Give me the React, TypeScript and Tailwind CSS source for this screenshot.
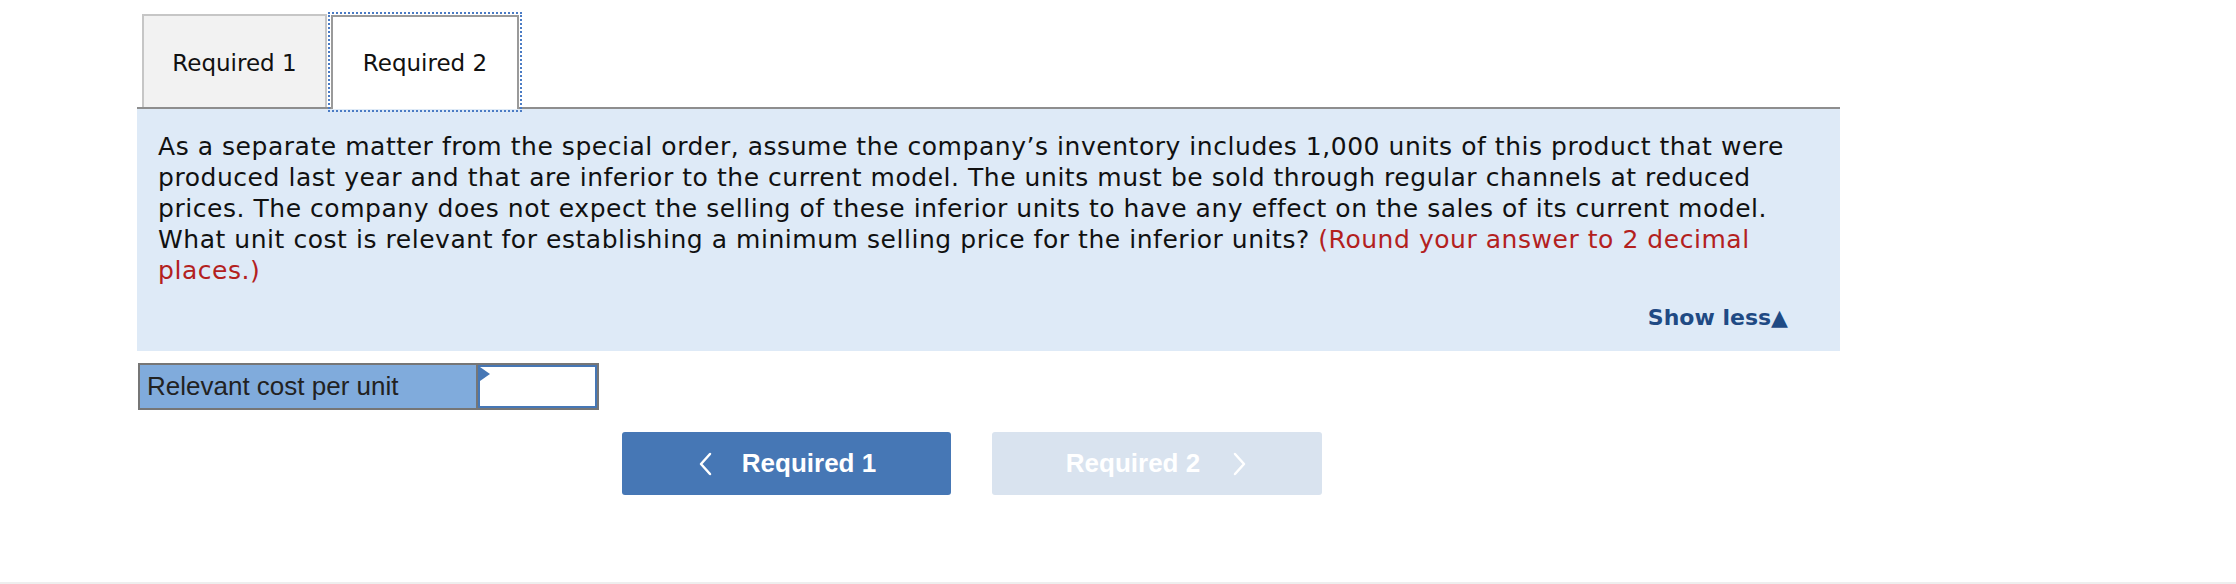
import React from "react";

const verdana = { fontFamily: '"DejaVu Sans", Verdana, sans-serif' };
const arial = { fontFamily: '"Liberation Sans", Arial, sans-serif' };

function Chevron({ dir }: { dir: "left" | "right" }) {
  return (
    <svg width="16" height="24" viewBox="0 0 16 24" fill="none" stroke="currentColor" strokeWidth={2.5} strokeLinecap="round" strokeLinejoin="round">
      {dir === "left" ? <path d="M13 2 L4 12 L13 22" /> : <path d="M3 2 L12 12 L3 22" />}
    </svg>
  );
}

export default function App() {
  return (
    <div className="w-[2236px] h-[584px] bg-white border-b-2 border-[#eeeeee] flex flex-col">
      <div className="pl-[137px] pt-[12px] w-[1840px]">
        {/* Tabs */}
        <div className="flex items-start h-[97px] border-b-2 border-[#8e8e8e]" style={verdana}>
          <div className="ml-[5px] mt-[2px] w-[185px] h-[93px] bg-[#f2f2f2] border-2 border-b-0 border-[#c6c6c6] flex items-center justify-center pt-[3px] text-[23px] text-[#111]">
            Required 1
          </div>
          <div className="relative z-10 ml-[4px] mt-[3px] w-[188px] h-[94px] bg-white border-2 border-b-0 border-[#9a9a9a] outline-2 outline-dotted outline-[#4a7bc4] outline-offset-1 flex items-center justify-center text-[23px] text-[#111]">
            Required 2
          </div>
        </div>

        {/* Question panel */}
        <div className="h-[242px] bg-[#deeaf7] pl-[21px] pr-[35px] pt-[22px] flex flex-col" style={verdana}>
          <p className="text-[25px] leading-[31px] tracking-[0.54px] text-[#111]">
            As a separate matter from the special order, assume the company’s inventory includes 1,000 units of this product that were produced last year and that are inferior to the current model. The units must be sold through regular channels at reduced prices. The company does not expect the selling of these inferior units to have any effect on the sales of its current model. What unit cost is relevant for establishing a minimum selling price for the inferior units?{" "}
            <span className="text-[#b3211e]">(Round your answer to 2 decimal places.)</span>
          </p>
          <div className="flex justify-end mt-[17px] mr-[17px]">
            <span className="text-[22px] leading-[30px] font-bold text-[#1f4a84]">Show less▲</span>
          </div>
        </div>

        {/* Answer row */}
        <div className="flex ml-[1px] mt-[12px] h-[47px]" style={arial}>
          <div className="w-[340px] border-2 border-[#767676] bg-[#80abdc] flex items-center pl-[7px] text-[26px] text-[#222]">
            Relevant cost per unit
          </div>
          <div className="w-[121px] border-2 border-l-0 border-[#767676]">
            <div className="relative w-full h-full border-2 border-[#4677b5] bg-white">
              <span className="absolute left-0 top-0 w-0 h-0 border-y-[7px] border-y-transparent border-l-[10px] border-l-[#4677b5]" />
            </div>
          </div>
        </div>

        {/* Nav buttons */}
        <div className="flex ml-[485px] mt-[22px] gap-[41px]" style={arial}>
          <button className="w-[329px] h-[63px] rounded-[3px] bg-[#4677b5] text-white flex items-center justify-center gap-[29px] text-[26px] font-bold">
            <Chevron dir="left" />
            <span>Required 1</span>
          </button>
          <button className="w-[330px] h-[63px] rounded-[3px] bg-[#d9e3ef] text-white flex items-center justify-center gap-[32px] text-[26px] font-bold">
            <span>Required 2</span>
            <Chevron dir="right" />
          </button>
        </div>
      </div>
    </div>
  );
}
